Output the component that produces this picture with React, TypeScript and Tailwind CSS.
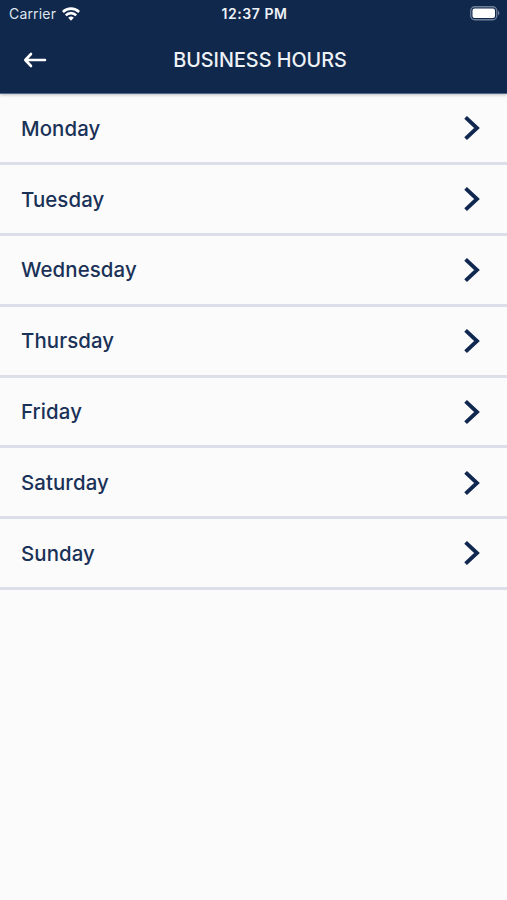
import React from "react";

const days = ["Monday", "Tuesday", "Wednesday", "Thursday", "Friday", "Saturday", "Sunday"];

export default function App() {
  return (
    <div className="flex h-[900px] w-full flex-col bg-[#fbfbfb] font-['Inter',sans-serif] text-[#10284f]">
      <header className="relative h-[94px] border-b border-[#52658a] bg-[#10284c] text-white shadow-[0_1px_3px_rgba(0,0,0,0.25)]">
        <div className="grid h-[27px] grid-cols-3 items-center pl-[9px] pr-[7px]">
          <div className="flex items-center gap-[6px]">
            <span className="text-[14px] tracking-[0.17px] text-[#dfe5ee]">Carrier</span>
            <svg width="18" height="14" viewBox="0 0 18 14" fill="none" stroke="white" strokeWidth="2.6">
              <path d="M0.9 5a11.5 11.5 0 0 1 16.2 0M3.8 8.3a7.4 7.4 0 0 1 10.4 0" />
              <path d="M6.2 10.8a4 4 0 0 1 5.6 0L9 13.8z" fill="white" stroke="none" />
            </svg>
          </div>
          <span className="text-center text-[14px] font-semibold tracking-[0.55px] whitespace-nowrap text-[#eef2f7]">12:37 PM</span>
          <svg className="justify-self-end" width="30" height="15" viewBox="0 0 30 15">
            <rect x="0.75" y="0.75" width="26" height="13" rx="4" fill="none" stroke="#6f7e98" strokeWidth="1.3" />
            <rect x="2.5" y="2.5" width="22.5" height="9.5" rx="2" fill="white" />
            <path d="M28 4.5q3 2.5 0 5z" fill="#6f7e98" />
          </svg>
        </div>
        <div className="grid h-[66px] grid-cols-[70px_1fr_57px] items-center">
          <svg className="ml-[23px]" width="24" height="16" viewBox="0 0 24 16" fill="none" stroke="white" strokeWidth="2.6" strokeLinecap="round" strokeLinejoin="round">
            <path d="M22 8H2.5M8 2L2.3 8L8 14" />
          </svg>
          <h1 className="pt-px text-center text-[19.8px] font-medium text-[#eef2f7]">BUSINESS HOURS</h1>
        </div>
      </header>
      <ul>
        {days.map((day) => (
          <li key={day} className="flex h-[70.88px] items-center justify-between border-b-[3px] border-[#dcdfe9] pl-[21px] pr-[26px] pt-[0.5px]">
            <span className="pt-[1.5px] text-[20.4px] font-medium tracking-[0.1px] text-[#1a3157]">{day}</span>
            <svg width="18" height="26" viewBox="0 0 18 26" fill="none" stroke="#10284f" strokeWidth="3.9">
              <path d="M2.6 2.3L14 13L2.6 23.7" />
            </svg>
          </li>
        ))}
      </ul>
    </div>
  );
}
